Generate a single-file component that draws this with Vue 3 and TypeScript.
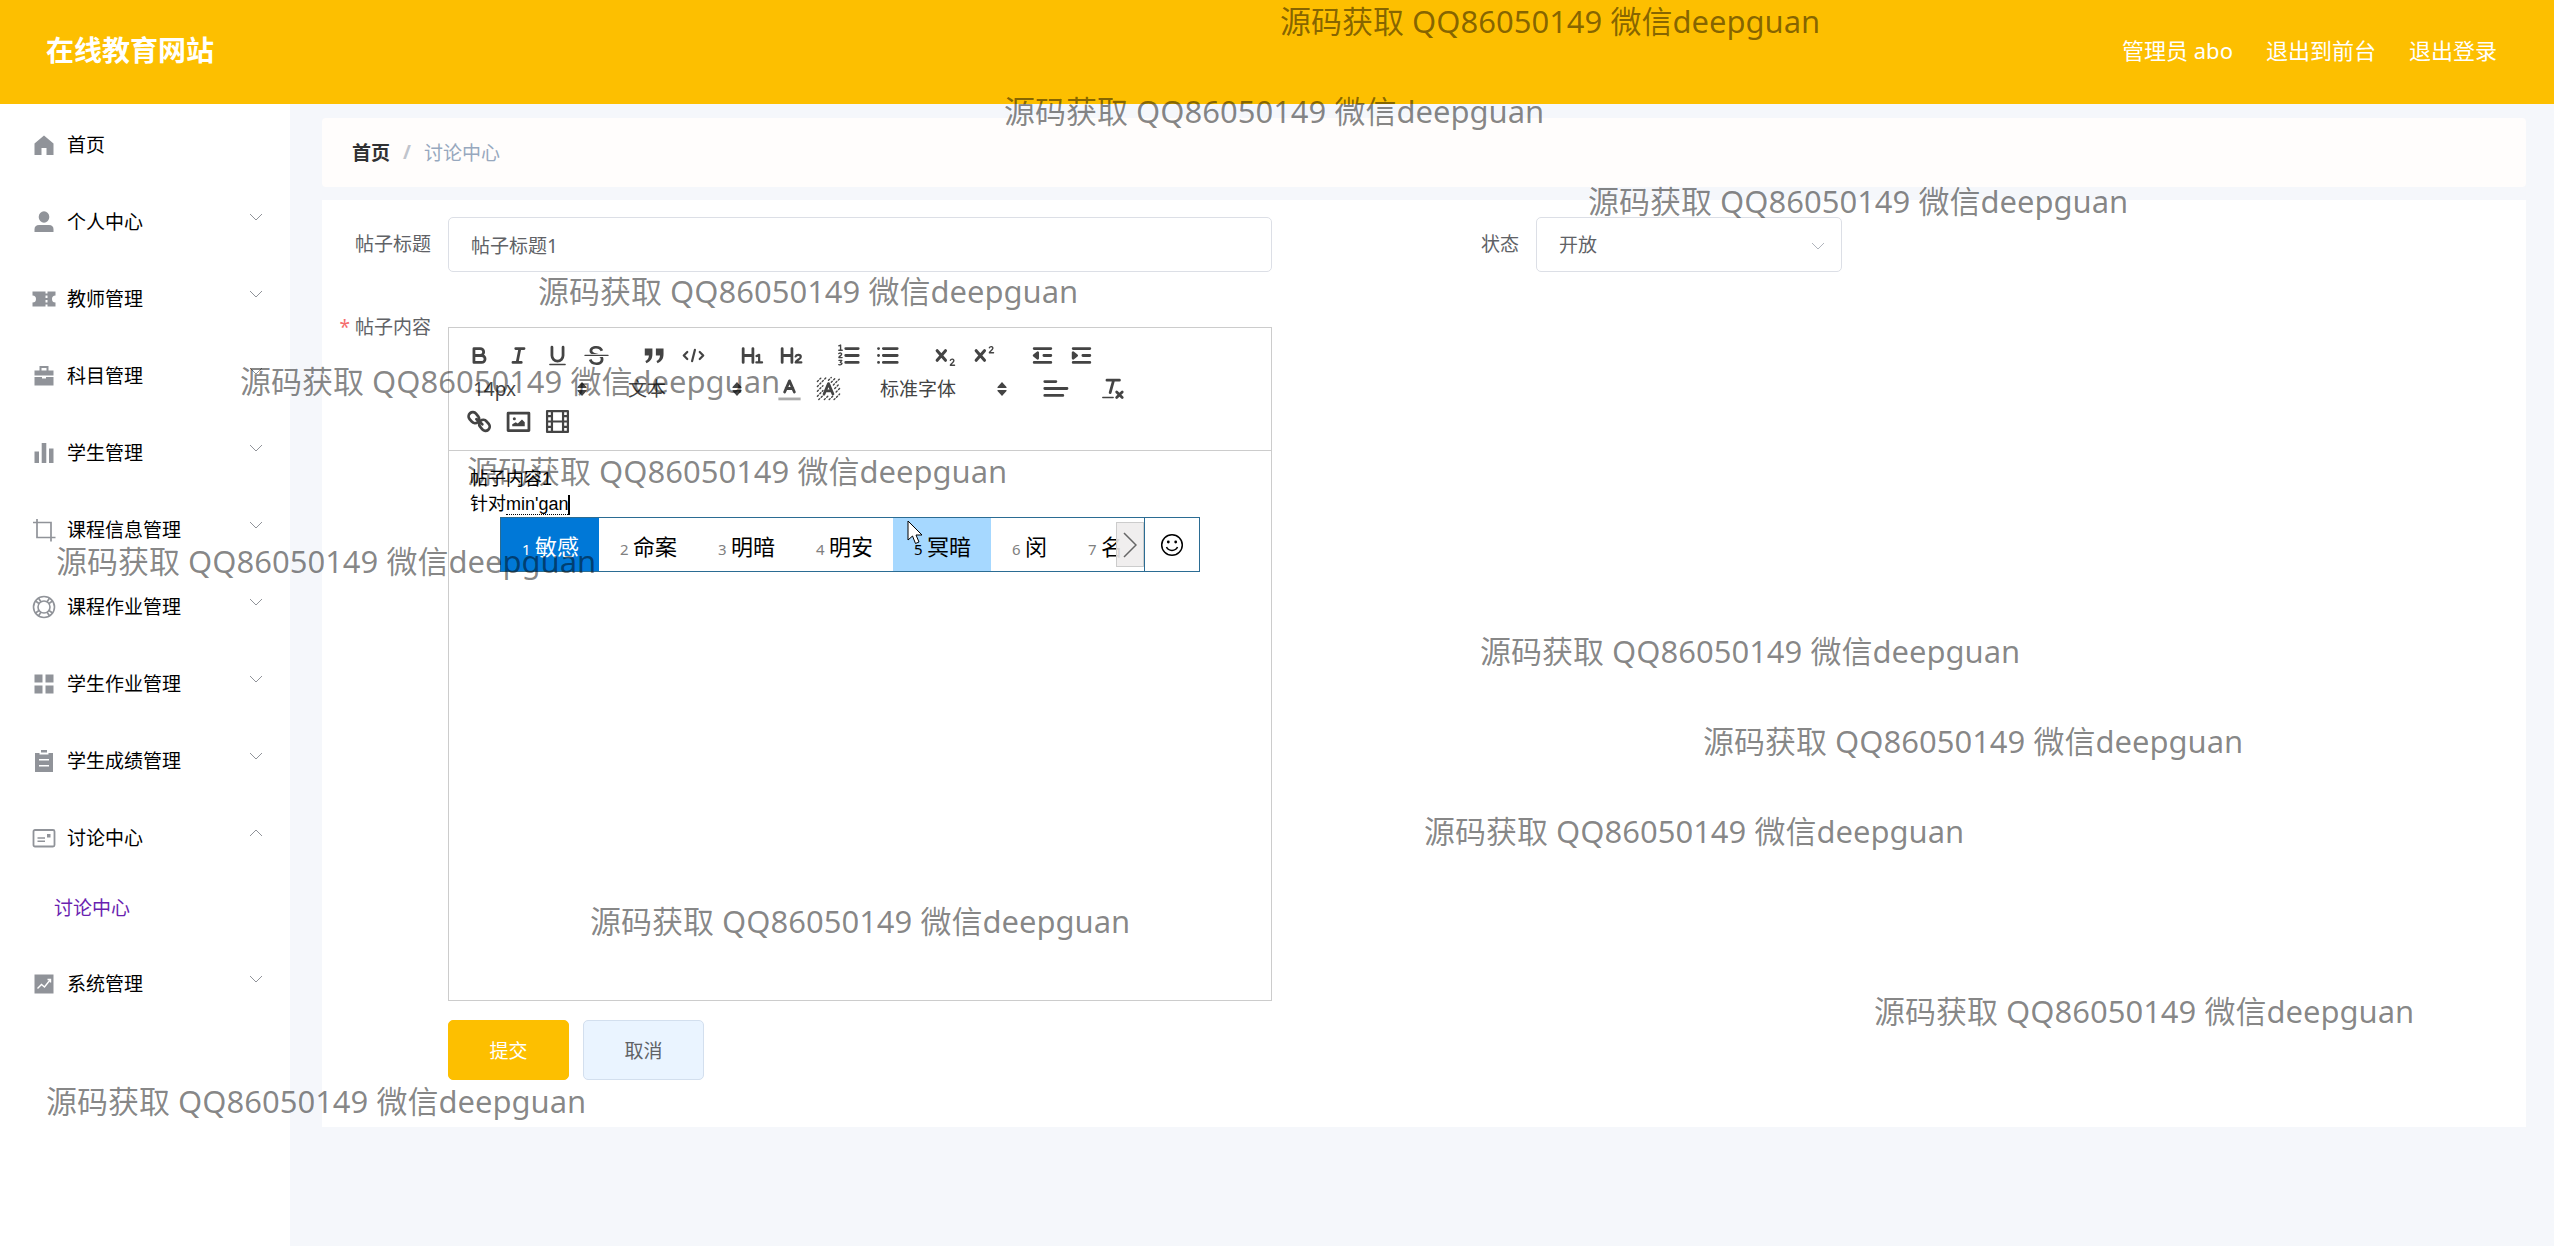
<script setup lang="ts">
import { ref } from 'vue'

interface MenuItem {
  label: string
  icon: string
  arrow?: 'down' | 'up'
  children?: string[]
}

const menu: MenuItem[] = [
  { label: '首页', icon: 'home' },
  { label: '个人中心', icon: 'user', arrow: 'down' },
  { label: '教师管理', icon: 'ticket', arrow: 'down' },
  { label: '科目管理', icon: 'case', arrow: 'down' },
  { label: '学生管理', icon: 'data', arrow: 'down' },
  { label: '课程信息管理', icon: 'crop', arrow: 'down' },
  { label: '课程作业管理', icon: 'help', arrow: 'down' },
  { label: '学生作业管理', icon: 'grid', arrow: 'down' },
  { label: '学生成绩管理', icon: 'order', arrow: 'down' },
  { label: '讨论中心', icon: 'postcard', arrow: 'up', children: ['讨论中心'] },
  { label: '系统管理', icon: 'marketing', arrow: 'down' },
]

// Sidebar glyphs on a 24 × 24 grid, filled with currentColor unless a stroke is set.
const menuIcons: Record<string, string> = {
  home: '<path d="M12 2.5L21.500 10.500V22H14.500V15H9.500V22H2.500V10.500Z"/>',
  user: '<ellipse cx="12" cy="7" rx="5.300" ry="5.800"/><path d="M2.500 22V19.500Q2.500 15 7 15H17Q21.500 15 21.500 19.500V22Z"/>',
  ticket: '<path d="M.5 4.500H13.500V6.500H15.500V4.500H23.500V8.500A3.500 3.500 0 0 0 23.500 15.500V19.500H15.500V17.500H13.500V19.500H.5V15.500A3.500 3.500 0 0 0 .5 8.500ZM13.500 8.500V11H15.500V8.500ZM13.500 13V15.500H15.500V13Z" fill-rule="evenodd"/>',
  case: '<path d="M7.500 6.500V2H16.500V6.500H21.500V11.500H2.500V6.500ZM9.500 4V6.500H14.500V4ZM2.500 13H10V14.500H14V13H21.500V21.500H2.500Z" fill-rule="evenodd"/>',
  data: '<path d="M2.500 10.500H7V22H2.500ZM9.700 2H14.300V22H9.700ZM17 7.500H21.500V22H17Z"/>',
  crop: '<path d="M5 1V19.500H23.500M1 4.500H19V23.500" fill="none" stroke="currentColor" stroke-width="1.700"/>',
  help: '<g fill="none" stroke="currentColor" stroke-width="1.600"><circle cx="12" cy="12" r="10.500"/><circle cx="12" cy="12" r="6"/><path d="M6.500 3L9 7M3.500 6L7 8.500M17.500 3L15 7M20.500 6L17 8.500M6.500 21L9 17M3.500 18L7 15.500M17.500 21L15 17M20.500 18L17 15.500"/></g>',
  grid: '<path d="M2.500 2.500H10.500V10.500H2.500ZM13.500 2.500H21.500V10.500H13.500ZM2.500 13.500H10.500V21.500H2.500ZM13.500 13.500H21.500V21.500H13.500Z"/>',
  order: '<path d="M9 1H15V3.500H9ZM3 4H7.500V5.500H16.500V4H21V23H3ZM7 10V11.500H17V10ZM7 16V17.500H17V16Z" fill-rule="evenodd"/>',
  postcard: '<rect x="1.500" y="4" width="21" height="16.500" rx="1.500" fill="none" stroke="currentColor" stroke-width="1.800"/><path d="M5.500 11.300H13V12.800H5.500ZM5.500 14.500H13V16H5.500ZM15 8H18.500V11.500H15Z"/>',
  marketing: '<path d="M2.500 2.500H21.500V21.500H2.500Z"/><path d="M5.500 16.500L9.500 12.500L12.500 15L18 8M15.500 7.500H18.500V10.500" fill="none" stroke="#fff" stroke-width="1.400"/>',
}

interface Tool {
  kind: 'button' | 'select'
  name: string
  art?: string
  wide?: boolean
}

// Toolbar glyphs on an 18 × 18 grid. s = stroke, t = thin stroke, u/e = medium, b = bold, f = fill.
const art: Record<string, string> = {
  bold: '<path class="s" d="M5 4H9.500A2.500 2.500 0 0 1 12 6.500A2.500 2.500 0 0 1 9.500 9H5ZM5 9H10.500A2.500 2.500 0 0 1 13 11.500A2.500 2.500 0 0 1 10.500 14H5Z"/>',
  italic: '<path class="s" d="M7 4H13M5 14H11M8 14L10 4"/>',
  underline: '<path class="s" d="M5 3V9A4 4 0 0 0 9 13A4 4 0 0 0 13 9V3"/><rect class="f" x="3" y="15" width="12" height="1" rx=".5"/>',
  strike: '<path class="t" d="M.7 8.900H17.300"/><path class="f" d="M6.500 8H10.500C9 7.500 6 7.200 6 5.600C6 4.500 7.200 4 8.600 4C10.500 4 11.500 4.800 12 6L13.800 5.200C13 3.300 11.400 2.200 8.900 2.200C6 2.200 4 3.500 4 5.700C4 6.700 4.600 7.500 5.400 8ZM11 10C12 10.500 12 11 12 11.800C12 13 10.800 14 9 14C7 14 5.900 13 5.400 11.500L3.500 12.300C4.300 14.600 6 15.800 9 15.800C12 15.800 14 14.200 14 11.800C14 11 13.900 10.500 13.600 10Z"/>',
  quote: '<path class="f" d="M2 4H7.500V8C7.500 11.500 6 13.500 3.200 14.500L2.400 13C4 12.300 4.800 11.200 5 9H2ZM10 4H15.500V8C15.500 11.500 14 13.500 11.200 14.500L10.400 13C12 12.300 12.800 11.200 13 9H10Z"/>',
  code: '<path class="e" d="M4.500 6.500L2 9L4.500 11.500M13.500 6.500L16 9L13.500 11.500M10 5L8 13"/>',
  h1: '<path class="s" d="M3 4V14M10 4V14M3 9H10"/><path class="u" d="M12.600 9.400L14.500 8.500V14M12.500 14H16.600"/>',
  h2: '<path class="s" d="M3 4V14M10 4V14M3 9H10"/><path class="u" d="M12.700 9.700C13.200 8.100 16.400 8 16.400 10C16.400 11.500 13 12.500 12.700 14H16.800"/>',
  ol: '<path class="s" d="M7 4H16M7 9H16M7 14H16"/><path class="t" d="M2 2L3.300 1.500V5M2 5.200H4.500M2 7.600C3 6.900 4.300 7.300 4 8.300C3.800 9.100 2.200 9.600 2.100 10.500H4.400M2.100 12.500H4.200L3.100 14C5 14 4.600 16.200 2 15.600"/>',
  ul: '<path class="s" d="M6 4H16M6 9H16M6 14H16M2.500 4H2.600M2.500 9H2.600M2.500 14H2.600"/>',
  sub: '<path class="b" d="M3 5.500L9 12.500M9 5.500L3 12.500"/><path class="t" d="M12.500 12.500C13 11.200 15.200 11.400 15 12.900C14.800 14.300 12.800 14.800 12.500 16H15.500"/>',
  sup: '<path class="b" d="M3 5.500L9 12.500M9 5.500L3 12.500"/><path class="t" d="M12.500 3.500C13 2.200 15.200 2.400 15 3.900C14.800 5.300 12.800 5.800 12.500 7H15.500"/>',
  outdent: '<path class="s" d="M3 4H15M3 14H15M10 9H15"/><path class="s" d="M5.500 7V11L3 9Z"/>',
  indent: '<path class="s" d="M3 4H15M3 14H15M10 9H15"/><path class="s" d="M3 7V11L5.500 9Z"/>',
  color: '<path class="f" d="M1 15.500H17V17.500H1Z" opacity=".45"/><path class="s" d="M5.500 11.500L9 3.500L12.500 11.500M6.500 9H11.500"/>',
  background: '<path class="t" stroke-dasharray="1 1.500" d="M1 4L4 1M1 7.500L7.500 1M1 11L5 7M1 14.500L5 10.500M2 17L6 13M6 17L9 14M9.500 17L12 14.500M13 17L17 13M9 3L11 1M11 4.500L14.500 1M12.500 6.500L17 2M13.500 9L17 5.500M14.500 11.500L17 9"/><path class="s" d="M5.800 13L9 5.500L12.200 13M7 10.700H11"/>',
  align: '<path class="s" d="M2 9H18M2 14H15M2 4H10"/>',
  clean: '<path class="s" d="M5 3H14M9.800 3L7.300 12M12 11.500L16 15.500M16 11.500L12 15.500"/><path class="t" d="M2 15.500H9.500"/>',
  link: '<rect class="s" x="2" y="2" width="6" height="8.500" rx="3" transform="rotate(-40 5 6.300)"/><rect class="s" x="9.500" y="7.500" width="6" height="8.500" rx="3" transform="rotate(-40 12.500 11.700)"/><path class="s" d="M6.800 7.300L11 11"/>',
  image: '<rect class="s" x="1.500" y="3" width="15" height="12.500"/><circle class="f" cx="6" cy="7" r="1.100"/><path class="f" d="M4.500 12.500V11L7 9.500L8.500 10.500L11.500 7.500L13.500 9.500V12.500Z"/>',
  video: '<rect class="u" x="1.500" y="1.500" width="15" height="15"/><path class="u" d="M5 2V16M13 2V16M5 9H13M2 5.200H5M2 9H5M2 12.800H5M13 5.200H16M13 9H16M13 12.800H16"/>',
}

const b = (name: string): Tool => ({ kind: 'button', name, art: art[name] })
const toolbar: Tool[][][] = [
  [
    [b('bold'), b('italic'), b('underline'), b('strike')],
    [b('quote'), b('code')],
    [b('h1'), b('h2')],
    [b('ol'), b('ul')],
    [b('sub'), b('sup')],
    [b('outdent'), b('indent')],
  ],
  [
    [{ kind: 'select', name: '14px' }],
    [{ kind: 'select', name: '文本' }],
    [b('color'), b('background')],
    [{ kind: 'select', name: '标准字体', wide: true }],
    [b('align')],
    [b('clean')],
  ],
  [[b('link'), b('image'), b('video')]],
]

const candidates = ['敏感', '命案', '明暗', '明安', '冥暗', '闵', '名']
const title = ref('帖子标题1')
const status = ref('开放')

const notice = '源码获取 QQ86050149 微信deepguan'
const notices = [
  [1280, 0], [1004, 90], [1588, 180], [538, 270], [240, 360], [467, 450], [56, 540],
  [1480, 630], [1703, 720], [1424, 810], [590, 900], [1874, 990], [46, 1080],
]
</script>

<template>
  <div class="page">
    <header class="header">
      <h1 class="brand">在线教育网站</h1>
      <nav class="account">
        <span>管理员 abo</span>
        <a href="#">退出到前台</a>
        <a href="#">退出登录</a>
      </nav>
    </header>

    <div class="layout">
      <aside class="sidebar">
        <ul class="menu">
          <li v-for="item in menu" :key="item.label">
            <a href="#" class="menu-item">
              <svg class="menu-icon" viewBox="0 0 24 24" v-html="menuIcons[item.icon]" />
              <span>{{ item.label }}</span>
              <svg v-if="item.arrow" class="menu-arrow" :class="item.arrow" viewBox="0 0 14 8">
                <path d="M1 1L7 7L13 1" />
              </svg>
            </a>
            <a v-for="child in item.children" :key="child" href="#" class="submenu-item">{{ child }}</a>
          </li>
        </ul>
      </aside>

      <main class="main">
        <nav class="breadcrumb">
          <a href="#">首页</a>
          <span class="slash">/</span>
          <span class="current">讨论中心</span>
        </nav>

        <form class="card" @submit.prevent>
          <div class="row">
            <div class="col">
              <div class="field">
                <label for="title">帖子标题</label>
                <input id="title" v-model="title" type="text" class="control">
              </div>
            </div>
            <div class="col">
              <div class="field">
                <label for="status">状态</label>
                <div class="select-box">
                  <select id="status" v-model="status" class="control">
                    <option>开放</option>
                  </select>
                  <svg class="select-arrow" viewBox="0 0 14 8"><path d="M1 1L7 7L13 1" /></svg>
                </div>
              </div>
            </div>
          </div>

          <div class="row">
            <div class="col">
              <div class="field">
                <label id="content-label" class="required">帖子内容</label>
                <div class="editor">
                  <div class="toolbar">
                    <div v-for="(line, l) in toolbar" :key="l" class="tool-line">
                      <div v-for="(group, g) in line" :key="g" class="tool-group">
                        <template v-for="tool in group" :key="tool.name">
                          <button v-if="tool.kind === 'button'" type="button" class="tool" :aria-label="tool.name">
                            <svg viewBox="0 0 18 18" v-html="tool.art" />
                          </button>
                          <div v-else class="picker" :class="{ wide: tool.wide }">
                            <select :aria-label="tool.name">
                              <option>{{ tool.name }}</option>
                            </select>
                            <svg viewBox="0 0 10 14"><path d="M5 0L9.500 5V6H.5V5ZM5 14L9.500 9V8H.5V9Z" /></svg>
                          </div>
                        </template>
                      </div>
                    </div>
                  </div>
                  <div class="content" contenteditable="true" spellcheck="false" aria-labelledby="content-label">
                    <p>帖子内容1</p>
                    <p>针对<span class="composing">min'gan</span><i class="caret" /></p>
                  </div>

                  <div class="ime">
                    <div class="ime-list">
                      <div
                        v-for="(word, i) in candidates"
                        :key="word"
                        class="ime-word"
                        :class="{ chosen: i === 0, hovered: i === 4 }"
                      >
                        <span class="num">{{ i + 1 }}</span><span>{{ word }}</span>
                      </div>
                      <button type="button" class="ime-next" aria-label="next">
                        <svg viewBox="0 0 14 26"><path d="M1 1L13 13L1 25" /></svg>
                      </button>
                    </div>
                    <button type="button" class="ime-face" aria-label="emoji">
                      <svg viewBox="0 0 24 24">
                        <circle cx="12" cy="12" r="10.300" />
                        <path d="M6.500 14C8.500 18.500 15.500 18.500 17.500 14" />
                        <circle class="eye" cx="8.300" cy="9" r="1.400" />
                        <circle class="eye" cx="15.700" cy="9" r="1.400" />
                      </svg>
                    </button>
                    <svg class="pointer" viewBox="0 0 16 25">
                      <path d="M1 1V20L5.500 16L8.500 23.500L12 22L9 15H15Z" />
                    </svg>
                  </div>
                </div>
              </div>
            </div>
          </div>

          <div class="actions">
            <button type="submit" class="btn primary">提交</button>
            <button type="button" class="btn">取消</button>
          </div>
        </form>
      </main>
    </div>

    <div class="notices">
      <span
        v-for="([x, y], i) in notices"
        :key="i"
        :style="{ left: x + 'px', top: y + 'px' }"
      >{{ notice }}</span>
    </div>
  </div>
</template>

<style>
body {
  margin: 0;
  background: #f5f7fb;
}
</style>

<style scoped>
.page {
  position: relative;
  display: flex;
  flex-direction: column;
  min-height: 100vh;
  overflow: hidden;
  font-family: "Noto Sans", "Noto Sans CJK SC", sans-serif;
  font-size: 19px;
  color: #000;
}
.page * {
  box-sizing: border-box;
}
a {
  color: inherit;
  text-decoration: none;
}
button,
input,
select {
  margin: 0;
  font: inherit;
  color: inherit;
}
.header {
  display: flex;
  align-items: center;
  justify-content: space-between;
  height: 104px;
  padding: 0 57px 7px 46px;
  background: #fdbf00;
  color: #fff;
}
.brand {
  margin: 0;
  font-size: 28px;
  font-weight: 700;
}
.account {
  display: flex;
  gap: 33px;
  font-size: 22px;
}
.layout {
  display: flex;
  flex: 1;
}
.sidebar {
  width: 290px;
  background: #fff;
}
.menu {
  margin: 0;
  padding: 1px 0 0;
  list-style: none;
}
.menu-item {
  display: flex;
  align-items: center;
  gap: 11px;
  height: 77px;
  padding: 0 27px 0 32px;
}
.menu-icon {
  width: 24px;
  height: 24px;
  margin-top: 3px;
  fill: currentColor;
  color: #909399;
}
.menu-arrow {
  width: 14px;
  height: 8px;
  margin: 0 0 7px auto;
  fill: none;
  stroke: #909399;
}
.menu-arrow.up {
  transform: rotate(180deg);
}
.submenu-item {
  display: block;
  height: 69px;
  padding-left: 54px;
  line-height: 67px;
  color: #6a1fb0;
}
.main {
  flex: 1;
  padding: 14px 28px 0 32px;
}
.breadcrumb {
  display: flex;
  align-items: center;
  gap: 13px;
  height: 69px;
  margin-bottom: 13px;
  padding: 0 30px 2px;
  border-radius: 4px;
  background: #fffdfc;
  color: #97a8be;
}
.breadcrumb a {
  font-weight: 700;
  color: #303133;
}
.slash {
  font-weight: 700;
  color: #c0c4cc;
}
.card {
  padding: 17px 14px 47px;
  background: #fff;
}
.row {
  display: flex;
}
.row + .row {
  margin-top: 28px;
}
.col {
  width: 50%;
}
.field {
  display: flex;
  width: 86%;
}
.field label {
  flex: none;
  width: 112px;
  padding-right: 17px;
  line-height: 55px;
  text-align: right;
  color: #606266;
}
.required::before {
  content: "*";
  margin-right: 5px;
  color: #f56c6c;
}
.control {
  width: 100%;
  height: 55px;
  padding: 0 22px;
  border: 1px solid #dcdfe6;
  border-radius: 5px;
  background: #fff;
  color: #606266;
  outline: none;
  appearance: none;
}
.select-box {
  position: relative;
  width: 306px;
}
.select-arrow {
  position: absolute;
  top: 25px;
  right: 17px;
  width: 14px;
  height: 8px;
  fill: none;
  stroke: #b0b4bc;
}
.editor {
  position: relative;
  flex: 1;
  margin-top: 27px;
  border: 1px solid #ccc;
}
.toolbar {
  padding: 11px 11px 12px;
  border-bottom: 1px solid #ccc;
}
.tool-line {
  display: flex;
  gap: 19px;
}
.tool-group {
  display: flex;
}
.tool {
  display: flex;
  align-items: center;
  justify-content: center;
  width: 39px;
  height: 33px;
  padding: 0;
  border: 0;
  background: none;
}
.tool svg {
  width: 25px;
  height: 25px;
  overflow: visible;
}
.tool :deep(.s),
.tool :deep(.t),
.tool :deep(.u),
.tool :deep(.b),
.tool :deep(.e) {
  fill: none;
  stroke: #444;
  stroke-width: 2;
  stroke-linecap: round;
  stroke-linejoin: round;
}
.tool :deep(.t) {
  stroke-width: 1;
}
.tool :deep(.u),
.tool :deep(.e) {
  stroke-width: 1.6;
}
.tool :deep(.b) {
  stroke-width: 2.2;
}
.tool :deep(.f) {
  fill: #444;
}
.picker {
  position: relative;
  width: 136px;
  height: 33px;
  color: #444;
}
.picker.wide {
  width: 149px;
}
.picker select {
  width: 100%;
  height: 33px;
  padding: 0 13px;
  border: 0;
  background: none;
  appearance: none;
}
.picker svg {
  position: absolute;
  top: 10px;
  right: 9px;
  width: 10px;
  height: 14px;
  fill: #444;
}
.content {
  min-height: 549px;
  padding: 16px 21px;
  font-family: "Liberation Sans", "Noto Sans CJK SC", sans-serif;
  font-size: 18px;
  line-height: 25px;
  outline: none;
}
.content p {
  margin: 0;
}
.composing {
  border-bottom: 1px dotted #000;
}
.caret {
  display: inline-block;
  width: 2px;
  height: 20px;
  background: #000;
  vertical-align: middle;
}
.ime {
  position: absolute;
  top: 189px;
  left: 51px;
  display: flex;
  width: 700px;
  height: 55px;
  border: 1px solid #2b6c93;
  background: #fff;
  font-size: 22px;
}
.ime-list {
  position: relative;
  display: flex;
  flex: 1;
  overflow: hidden;
}
.ime-word {
  display: flex;
  flex: none;
  align-items: baseline;
  padding: 0 20px 0 21px;
  line-height: 57px;
}
.num {
  width: 13px;
  font-size: 15px;
  color: #808080;
}
.chosen {
  background: #0078d7;
}
.chosen,
.chosen .num {
  color: #fff;
}
.hovered {
  background: #a6d8ff;
}
.hovered .num {
  color: #000;
}
.ime-next {
  position: absolute;
  top: 4px;
  right: 0;
  display: flex;
  align-items: center;
  justify-content: center;
  width: 28px;
  height: 45px;
  padding: 0;
  border: 1px solid #ccc;
  background: rgba(238, 236, 236, 0.9);
}
.ime-next svg {
  width: 14px;
  height: 26px;
  fill: none;
  stroke: #666;
  stroke-width: 1.5;
}
.ime-face {
  display: flex;
  align-items: center;
  justify-content: center;
  width: 55px;
  padding: 0;
  border: 0;
  border-left: 1px solid #2b6c93;
  background: none;
}
.ime-face svg {
  width: 24px;
  height: 24px;
  fill: none;
  stroke: #000;
  stroke-width: 1.5;
}
.ime-face .eye {
  fill: #000;
  stroke: none;
}
.pointer {
  position: absolute;
  top: 2px;
  left: 406px;
  width: 16px;
  height: 25px;
  fill: #fff;
  stroke: #000;
}
.actions {
  display: flex;
  gap: 14px;
  margin-top: 19px;
  padding-left: 112px;
}
.btn {
  width: 121px;
  height: 60px;
  border: 1px solid #d3dfee;
  border-radius: 5px;
  background: #eaf4ff;
  color: #606266;
}
.btn.primary {
  border-color: #fdbf00;
  background: #fdbf00;
  color: #fff;
}
.notices {
  position: absolute;
  inset: 0;
  pointer-events: none;
}
.notices span {
  position: absolute;
  font-size: 31px;
  line-height: 42px;
  white-space: nowrap;
  color: rgba(0, 0, 0, 0.48);
}
</style>
